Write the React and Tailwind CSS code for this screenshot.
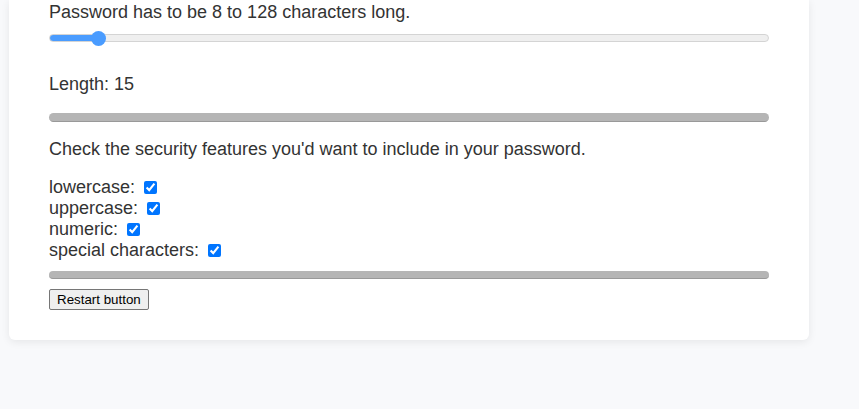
import { useState } from 'react';

const options = [
  { key: 'lowercase', label: 'lowercase:' },
  { key: 'uppercase', label: 'uppercase:' },
  { key: 'numeric', label: 'numeric:' },
  { key: 'special', label: 'special characters:' },
];

export default function App() {
  const [length, setLength] = useState(15);
  const [checks, setChecks] = useState({ lowercase: true, uppercase: true, numeric: true, special: true });

  const toggle = (key) => setChecks((c) => ({ ...c, [key]: !c[key] }));

  // track fill up to the thumb centre
  const fill = 7.5 + ((length - 8) / 120) * (720 - 15);

  return (
    <div className="min-h-[409px] bg-[#f8f9fb] font-['Liberation_Sans',Arial,sans-serif] text-[18px] leading-[21px] text-[#333]">
      <div className="ml-[9px] w-[800px] bg-white rounded-b-[6px] shadow-[0_2px_8px_rgba(0,0,0,0.08)] px-10 pt-[2px] pb-[30px]">
        <p>Password has to be 8 to 128 characters long.</p>
        <input
          type="range"
          min="8"
          max="128"
          value={length}
          onChange={(e) => setLength(Number(e.target.value))}
          style={{ background: `linear-gradient(to right, #4a9cff 0px, #4a9cff ${fill}px, #efefef ${fill}px)` }}
          className="block w-full h-[8px] m-0 mt-[11px] appearance-none rounded-full border border-[#d4d4d4] outline-none [&::-webkit-slider-thumb]:appearance-none [&::-webkit-slider-thumb]:w-[15px] [&::-webkit-slider-thumb]:h-[15px] [&::-webkit-slider-thumb]:rounded-full [&::-webkit-slider-thumb]:bg-[#4a9cff]"
        />

        <p className="mt-[32px]">Length: {length}</p>

        <hr className="mt-[18px] h-[9px] rounded-[5px] bg-[#b5b5b5] border-0 border-b border-b-[#999]" />

        <p className="mt-[17px]">Check the security features you'd want to include in your password.</p>

        <div className="mt-[17px]">
          {options.map((o) => (
            <div key={o.key}>
              <label>
                {o.label}{' '}
                <input
                  type="checkbox"
                  checked={checks[o.key]}
                  onChange={() => toggle(o.key)}
                  className="align-[-1px] ml-1 mr-[3px]"
                />
              </label>
            </div>
          ))}
        </div>

        <hr className="mt-[10px] h-[8px] rounded-[5px] bg-[#b5b5b5] border-0 border-b border-b-[#999]" />

        <button
          type="button"
          onClick={() => setLength(15)}
          className="mt-[10px] block h-[21px] px-[7px] border border-[#767676] rounded-[2px] bg-[#efefef] text-black text-[13.33px] leading-[15px]"
        >
          Restart button
        </button>
      </div>
    </div>
  );
}
